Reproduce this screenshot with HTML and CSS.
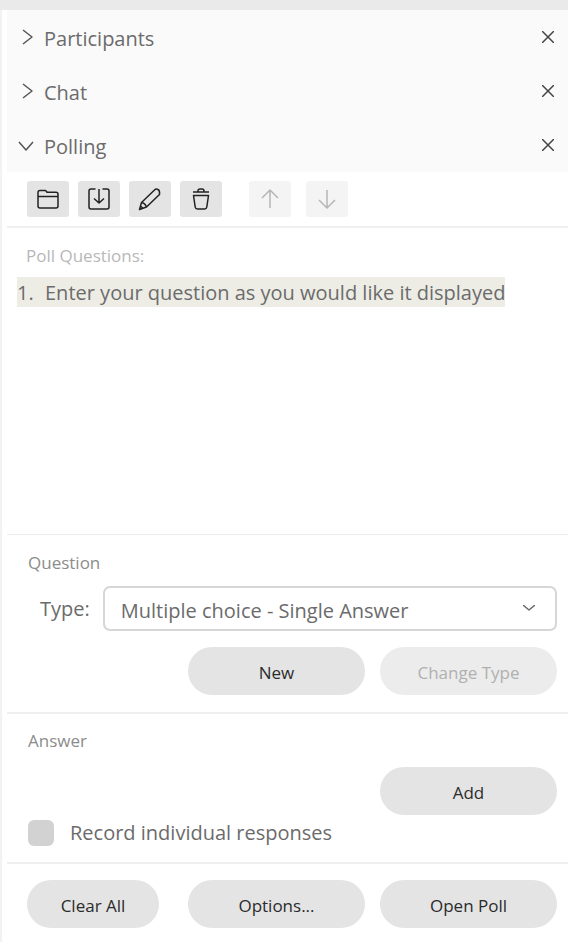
FILE: index.html
```html
<!DOCTYPE html>
<html lang="en">
<head>
    <meta charset="UTF-8">
    <meta name="viewport" content="width=device-width, initial-scale=1.0">
    <title>Polling</title>
    <link rel="stylesheet" href="styles.css">
</head>
<body>
    <div class="topbar"></div>
    <main class="sidebar">

        <div class="panels">
            <div class="panel">
                <button type="button" class="panel-toggle" aria-expanded="false">
                    <svg width="16" height="16" viewBox="0 0 16 16"><path d="M5 1l9 7-9 7"/></svg>
                    Participants
                </button>
                <button type="button" class="panel-close" aria-label="Close Participants">
                    <svg width="12" height="12" viewBox="0 0 12 12"><path d="M0 0l12 12M12 0L0 12"/></svg>
                </button>
            </div>
            <div class="panel">
                <button type="button" class="panel-toggle" aria-expanded="false">
                    <svg width="16" height="16" viewBox="0 0 16 16"><path d="M5 1l9 7-9 7"/></svg>
                    Chat
                </button>
                <button type="button" class="panel-close" aria-label="Close Chat">
                    <svg width="12" height="12" viewBox="0 0 12 12"><path d="M0 0l12 12M12 0L0 12"/></svg>
                </button>
            </div>
            <div class="panel">
                <button type="button" class="panel-toggle" aria-expanded="true">
                    <svg width="16" height="16" viewBox="0 0 16 16"><path d="M1 5l7 8 7-8"/></svg>
                    Polling
                </button>
                <button type="button" class="panel-close" aria-label="Close Polling">
                    <svg width="12" height="12" viewBox="0 0 12 12"><path d="M0 0l12 12M12 0L0 12"/></svg>
                </button>
            </div>
        </div>

        <div class="toolbar">
            <button type="button" class="tool" aria-label="Open">
                <svg width="24" height="24" viewBox="0 0 24 24"><path d="M2 9.500h20M2 19V5.500q0-2 2-2h5q1 0 1.500 1l.5.8h9q2 0 2 2V19q0 2-2 2H4q-2 0-2-2z"/></svg>
            </button>
            <button type="button" class="tool" aria-label="Save">
                <svg width="24" height="24" viewBox="0 0 24 24"><path d="M8.500 2H4Q2 2 2 4v16q0 2 2 2h16q2 0 2-2V4q0-2-2-2h-4.500M12 2v14M7 11.500l5 4.500 5-4.500"/></svg>
            </button>
            <button type="button" class="tool" aria-label="Edit">
                <svg width="24" height="24" viewBox="0 0 24 24"><path d="M3.500 15.500L16.500 3Q18 1.500 20 2.500T21.500 7.500L8.500 20 1.500 22.500zM3.500 15.500q3.500.5 5 4.500M1.500 22.500l3.500-1.200-2.500-2.300z"/></svg>
            </button>
            <button type="button" class="tool" aria-label="Delete">
                <svg width="24" height="24" viewBox="0 0 24 24"><path d="M4 5h16M9 5V4q0-2 2-2h2q2 0 2 2v1M4.500 8.500h15l-1.700 11.500q-.3 2-2.200 2H8.400q-1.900 0-2.200-2z"/></svg>
            </button>
            <button type="button" class="tool tool-up" aria-label="Move up" disabled>
                <svg width="24" height="24" viewBox="0 0 24 24"><path d="M12 21V3M4 11L12 3l8 8"/></svg>
            </button>
            <button type="button" class="tool tool-down" aria-label="Move down" disabled>
                <svg width="24" height="24" viewBox="0 0 24 24"><path d="M12 3v18M4 13l8 8 8-8"/></svg>
            </button>
        </div>

        <section class="questions">
            <h2>Poll Questions:</h2>
            <ol>
                <li><span class="number">1.</span>Enter your question as you would like it displayed</li>
            </ol>
        </section>

        <section class="question">
            <h2>Question</h2>
            <div class="type-row">
                <label for="type">Type:</label>
                <div class="select-box">
                    <select id="type">
                        <option>Multiple choice - Single Answer</option>
                        <option>Multiple choice - Multiple Answers</option>
                        <option>Short answer</option>
                    </select>
                    <svg width="12" height="6" viewBox="0 0 12 6"><path d="M0 0l6 5 6-5"/></svg>
                </div>
            </div>
            <div class="actions">
                <button type="button" class="btn btn-middle">New</button>
                <button type="button" class="btn" disabled>Change Type</button>
            </div>
        </section>

        <section class="answer">
            <h2>Answer</h2>
            <div class="actions">
                <button type="button" class="btn btn-last">Add</button>
            </div>
            <div class="record">
                <input type="checkbox" id="record">
                <label for="record">Record individual responses</label>
            </div>
        </section>

        <div class="actions footer">
            <button type="button" class="btn btn-clear">Clear All</button>
            <button type="button" class="btn">Options...</button>
            <button type="button" class="btn">Open Poll</button>
        </div>

    </main>
</body>
</html>
```
FILE: styles.css
```css
* {
    box-sizing: border-box;
}
body {
    margin: 0;
    min-height: 100vh;
    display: flex;
    flex-direction: column;
    font-family: "Open Sans", "Noto Sans", sans-serif;
    font-size: 20px;
    line-height: 30px;
    color: #6b6b6b;
    background: #fff;
}
button, select {
    font: inherit;
    color: inherit;
    border: none;
    cursor: pointer;
}
button:disabled {
    cursor: default;
}
svg {
    display: block;
    fill: none;
    stroke: currentColor;
    stroke-width: 1.5;
    stroke-linejoin: round;
}
h2 {
    margin: 0;
    font-size: 17px;
    line-height: 24px;
    font-weight: normal;
    color: #8c8c8c;
}
.topbar {
    height: 10px;
    background: #eaeaea;
}
.sidebar {
    flex: 1;
    display: flex;
    flex-direction: column;
    padding-left: 5px;
    border-left: 2px solid #f2f2f2;
}

/* Panel headers */
.panels {
    background: #fafafa;
}
.panel {
    display: flex;
    align-items: center;
    height: 54px;
    padding: 0 14px 0 11px;
}
.panel-toggle {
    flex: 1;
    display: flex;
    align-items: center;
    gap: 10px;
    padding: 4px 0 0;
    background: none;
}
.panel-toggle svg {
    margin-bottom: 4px;
    color: #555;
}
.panel-close {
    padding: 0;
    background: none;
    color: #444;
}

/* Toolbar */
.toolbar {
    display: flex;
    gap: 9px;
    padding: 9px 20px;
    border-bottom: 2px solid #f0f0f0;
}
.tool {
    display: flex;
    align-items: center;
    justify-content: center;
    width: 42px;
    height: 36px;
    padding: 0;
    border-radius: 3px;
    background: #e4e4e4;
    color: #222;
}
.tool:disabled {
    background: #f4f4f4;
    color: #b5b5b5;
}
.tool-up {
    margin-left: 18px;
}
.tool-down {
    margin-left: 6px;
}

/* Question list */
.questions {
    flex: 1;
    padding: 16px 10px 0;
}
.questions h2 {
    padding-left: 9px;
    color: #b8b8b8;
}
.questions ol {
    margin: 9px 0 0;
    padding: 0;
    list-style: none;
}
.questions li {
    width: fit-content;
    padding-top: 2px;
    line-height: 28px;
    background: #edede6;
}
.number {
    display: inline-block;
    width: 28px;
}

/* Forms */
.question, .answer, .footer {
    padding-left: 20px;
    padding-right: 11px;
}
.question h2, .answer h2 {
    padding-left: 1px;
}
.question {
    padding-top: 16px;
    padding-bottom: 17px;
    border-top: 1px solid #ececec;
    border-bottom: 2px solid #f0f0f0;
}
.type-row {
    display: flex;
    align-items: center;
    gap: 13px;
    margin: 11px 0 16px;
    padding-left: 13px;
}
.select-box {
    flex: 1;
    position: relative;
}
.select-box select {
    display: block;
    width: 100%;
    height: 45px;
    padding: 4px 40px 0 16px;
    border: 2px solid #d6d6d6;
    border-radius: 7px;
    background: #fff;
    appearance: none;
}
.select-box svg {
    position: absolute;
    right: 22px;
    top: 19px;
    pointer-events: none;
}
.actions {
    display: grid;
    grid-template-columns: 146fr 177fr 177fr;
    gap: 15px;
}
.btn {
    height: 48px;
    padding: 4px 0 0;
    border-radius: 24px;
    background: #e4e4e4;
    color: #2b2b2b;
    font-size: 17px;
}
.btn:disabled {
    background: #ececec;
    color: #b0b0b0;
}
.btn-middle {
    grid-column: 2;
}
.btn-last {
    grid-column: 3;
}
.btn-clear {
    margin-right: 14px;
}
.answer {
    padding-top: 15px;
    padding-bottom: 14px;
    border-bottom: 2px solid #f0f0f0;
}
.answer .actions {
    margin-top: 14px;
}
.record {
    display: flex;
    align-items: center;
    gap: 16px;
    margin-top: 3px;
}
.record input {
    width: 26px;
    height: 26px;
    margin: 0 0 0 1px;
    border-radius: 6px;
    background: #d2d2d2;
    appearance: none;
}
.record input:checked {
    background: #6b6b6b;
}
.footer {
    padding-top: 16px;
    padding-bottom: 14px;
}
```
